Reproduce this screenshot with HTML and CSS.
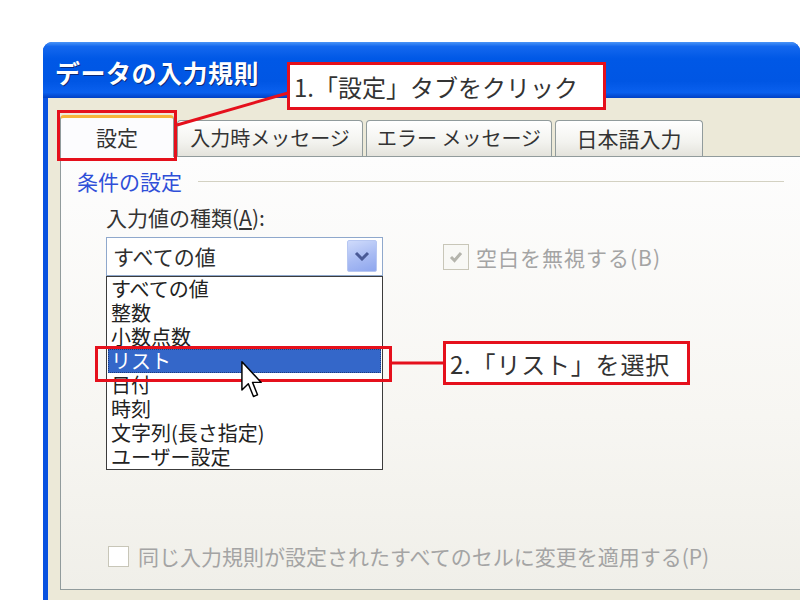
FILE: index.html
```html
<!DOCTYPE html>
<html lang="ja">
<head>
    <meta charset="UTF-8">
    <title>データの入力規則</title>
    <link rel="stylesheet" href="styles.css">
</head>
<body>
    <div class="window">
        <div class="titlebar"><span class="title">データの入力規則</span></div>
        <div class="window-body">
            <div class="tabs">
                <div class="tab active">設定</div>
                <div class="tab t2">入力時メッセージ</div>
                <div class="tab t3">エラー メッセージ</div>
                <div class="tab t4">日本語入力</div>
            </div>
            <div class="panel">
                <div class="group-head">
                    <span class="group-title">条件の設定</span>
                    <span class="rule"></span>
                </div>
                <div class="field-label">入力値の種類(<u>A</u>):</div>
                <div class="field-row">
                    <div class="combo">
                        <span class="combo-value">すべての値</span>
                        <span class="combo-btn">
                            <svg width="16" height="10" viewBox="0 0 16 10"><path d="M2 2 L8 8 L14 2" fill="none" stroke="#4a5a96" stroke-width="3"/></svg>
                        </span>
                        <ul class="droplist">
                            <li>すべての値</li>
                            <li>整数</li>
                            <li>小数点数</li>
                            <li class="selected">リスト</li>
                            <li>日付</li>
                            <li>時刻</li>
                            <li>文字列(長さ指定)</li>
                            <li>ユーザー設定</li>
                        </ul>
                    </div>
                    <div class="check ignore-blank">
                        <span class="box">
                            <svg width="18" height="18" viewBox="0 0 18 18"><path d="M4 9 L7.5 12.5 L14 5" fill="none" stroke="#b4b4ac" stroke-width="3"/></svg>
                        </span>
                        <span class="ignore-text">空白を無視する(B)</span>
                    </div>
                </div>
                <div class="check apply-all">
                    <span class="box small"></span>
                    <span>同じ入力規則が設定されたすべてのセルに変更を適用する(P)</span>
                </div>
            </div>
        </div>
    </div>

    <!-- annotations drawn over the screenshot -->
    <svg class="lines" width="800" height="600">
        <line x1="177" y1="125" x2="288" y2="93" stroke="#e5101c" stroke-width="3"/>
        <line x1="392" y1="363" x2="444" y2="363" stroke="#e5101c" stroke-width="3"/>
    </svg>
    <div class="mark mark-tab"></div>
    <div class="mark mark-item"></div>
    <div class="callout callout-1">1.「設定」タブをクリック</div>
    <div class="callout callout-2">2.「リスト」を選択</div>

    <svg class="cursor" width="22" height="40" viewBox="0 0 12 21">
        <path d="M0.5 0.5 L0.5 16 L4 12.5 L6.8 19.5 L9 18.6 L6.3 11.8 L11 11.8 Z" fill="#fff" stroke="#000" stroke-width="0.8" stroke-linejoin="round"/>
    </svg>
</body>
</html>
```

FILE: styles.css
```css
* {
    box-sizing: border-box;
    margin: 0;
    padding: 0;
}

html, body {
    overflow: hidden;
}

body {
    position: relative;
    width: 800px;
    height: 600px;
    background: #fff;
    font-family: "Noto Sans CJK JP", "Noto Sans", sans-serif;
    color: #2e2e2e;
}

/* window frame */
.window {
    margin: 42px 0 0 43px;
    width: 757px;
    background: #0852e0;
    border-radius: 9px 9px 0 0;
    overflow: hidden;
}

.titlebar {
    height: 56px;
    display: flex;
    align-items: center;
    padding: 4px 0 0 12px;
    background: linear-gradient(180deg, #4a95f7 0%, #1468ee 8%, #0058e6 30%, #0056e4 70%, #0a60ee 90%, #0040c4 100%);
}

.title {
    color: #fff;
    font-size: 25px;
    font-weight: 700;
    letter-spacing: 0.5px;
    text-shadow: 1px 1px 0 #0b2a7a;
}

.window-body {
    margin-left: 5px;
    height: 510px;
    background: #ece9d8;
    padding-top: 18px;
}

/* tabs */
.tabs {
    display: flex;
    align-items: flex-end;
    gap: 3px;
    padding-left: 12px;
    height: 40px;
}

.tab {
    width: 186px;
    height: 36px;
    border: 1px solid #919b9c;
    border-bottom: none;
    border-radius: 4px 4px 0 0;
    background: linear-gradient(180deg, #ffffff, #f3f3ef 60%, #e4e3dc);
    font-size: 20px;
    line-height: 34px;
    text-align: center;
    color: #333;
}

.tab.active {
    width: 114px;
    height: 42px;
    margin-bottom: -1px;
    position: relative;
    z-index: 1;
    background: #fcfcfe;
    border-top: 3px solid #f7b33a;
    font-size: 21px;
    line-height: 38px;
}

.tab.t4 {
    width: 148px;
    font-size: 21px;
}

.panel {
    margin-left: 12px;
    height: 434px;
    border: 1px solid #919b9c;
    border-right: none;
    background: linear-gradient(180deg, #fdfdfd, #f7f6f2 60%, #f0efe9);
    display: flex;
    flex-direction: column;
    padding: 12px 16px 21px;
    font-size: 21px;
}

.group-head {
    display: flex;
    align-items: center;
    height: 24px;
}

.group-title {
    color: #2f4fd8;
    line-height: 24px;
}

.rule {
    flex: 1;
    margin-left: 16px;
    border-top: 1px solid #d3d1c2;
}

.field-label {
    margin: 12px 0 0 29px;
    line-height: 24px;
    color: #333;
}

.field-row {
    display: flex;
    align-items: center;
    margin: 8px 0 0 29px;
}

/* combo box */
.combo {
    position: relative;
    width: 277px;
    height: 39px;
    border: 1px solid #8fa8cc;
    background: #fff;
}

.combo-value {
    display: block;
    padding-left: 6px;
    line-height: 36px;
}

.combo-btn {
    position: absolute;
    right: 5px;
    top: 2px;
    width: 30px;
    height: 32px;
    border: 1px solid #b7c7f2;
    border-radius: 2px;
    background: linear-gradient(160deg, #cfdbfb, #a8bbf3 55%, #8ea6ee);
    display: flex;
    align-items: center;
    justify-content: center;
}

.droplist {
    position: absolute;
    top: 38px;
    left: -1px;
    width: 277px;
    list-style: none;
    border: 1px solid #3c3c3c;
    background: #fff;
    padding: 0 1px;
    z-index: 2;
    font-size: 20px;
}

.droplist li {
    height: 24px;
    line-height: 24px;
    padding-left: 3px;
    color: #222;
}

.droplist li.selected {
    background: #3467c9;
    color: #fff;
    outline: 1px dotted #1b3a80;
    outline-offset: -1px;
}

/* check boxes */
.check {
    display: flex;
    align-items: center;
    color: #a4a4a4;
}

.ignore-blank {
    margin-left: 60px;
    gap: 7px;
}

.ignore-text {
    letter-spacing: 1px;
}

.box {
    width: 26px;
    height: 26px;
    border: 1px solid #c8c6b8;
    background: #f8f8f5;
    display: flex;
    align-items: center;
    justify-content: center;
}

.box.small {
    width: 21px;
    height: 21px;
    background: #fff;
}

.apply-all {
    margin: auto 0 0 31px;
    height: 24px;
    gap: 9px;
    font-size: 21px;
}

/* annotations */
.lines {
    position: absolute;
    left: 0;
    top: 0;
    z-index: 5;
}

.mark {
    position: absolute;
    border: 3px solid #e5101c;
    z-index: 6;
}

.mark-tab {
    left: 57px;
    top: 110px;
    width: 120px;
    height: 51px;
}

.mark-item {
    left: 95px;
    top: 346px;
    width: 297px;
    height: 36px;
}

.callout {
    position: absolute;
    border: 3px solid #e5101c;
    background: #fff;
    font-size: 24px;
    color: #333;
    padding-left: 4px;
    display: flex;
    align-items: center;
    z-index: 6;
}

.callout-1 {
    left: 287px;
    top: 62px;
    width: 319px;
    height: 48px;
}

.callout-2 {
    left: 443px;
    top: 341px;
    width: 247px;
    height: 44px;
    letter-spacing: 0.8px;
}

.cursor {
    position: absolute;
    left: 241px;
    top: 360px;
    z-index: 7;
}
```
